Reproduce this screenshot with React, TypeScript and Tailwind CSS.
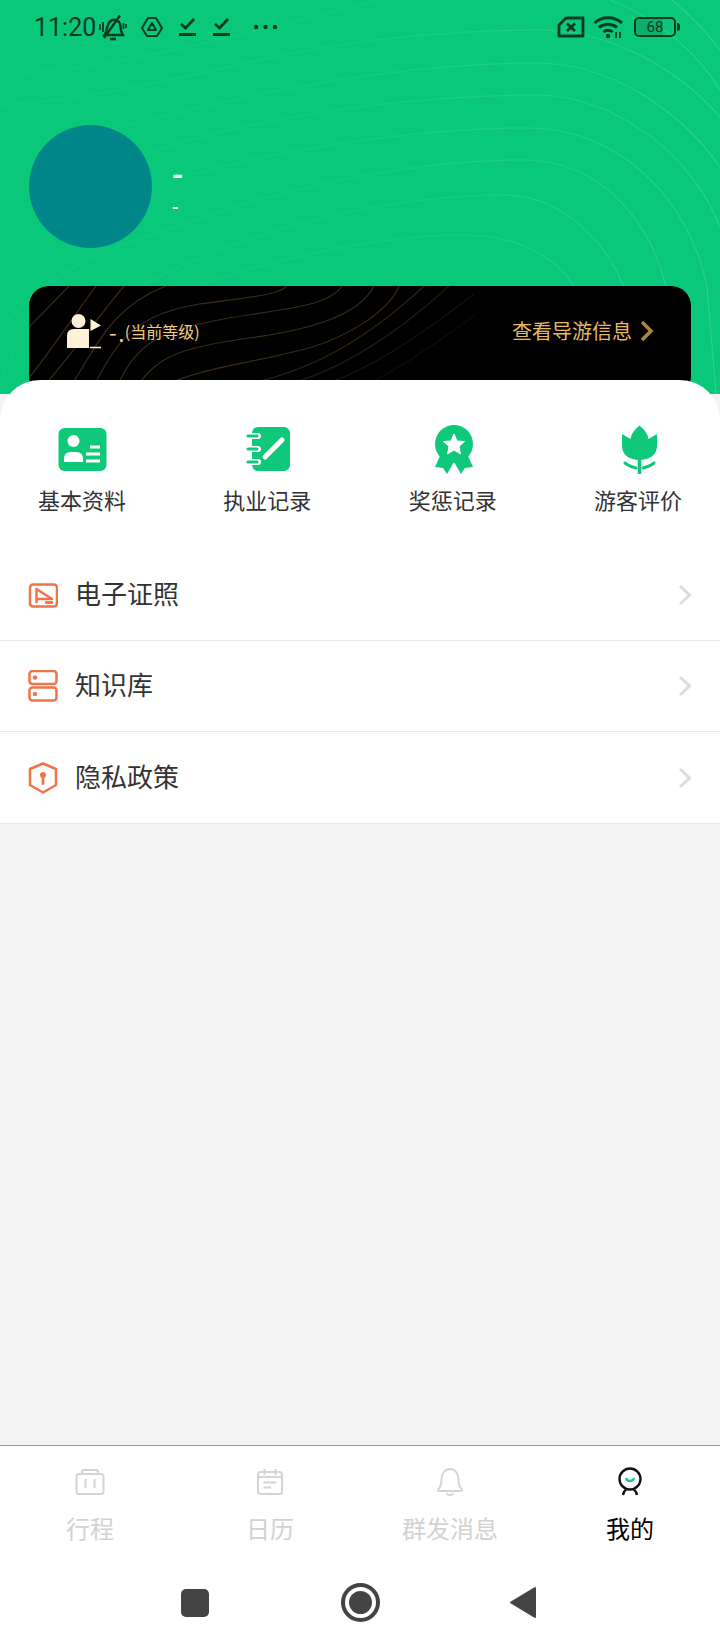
const FONT = "font-['Noto_Sans_CJK_SC','Noto_Sans',sans-serif]";

const GRID_ITEMS = [
  { label: "基本资料", icon: <CardIcon /> },
  { label: "执业记录", icon: <NoteIcon /> },
  { label: "奖惩记录", icon: <AwardIcon /> },
  { label: "游客评价", icon: <TulipIcon /> },
];

const ROWS = [
  { label: "电子证照", icon: <LicenseIcon />, height: "h-[91px]" },
  { label: "知识库", icon: <ServerIcon />, height: "h-[91px]" },
  { label: "隐私政策", icon: <ShieldIcon />, height: "h-[92px]" },
];

const TABS = [
  { label: "行程", icon: <BagIcon />, active: false },
  { label: "日历", icon: <CalendarIcon />, active: false },
  { label: "群发消息", icon: <BellIcon />, active: false },
  { label: "我的", icon: <MeIcon />, active: true },
];

function HeaderLines() {
  return (
    <svg className="absolute inset-0" width="720" height="394" fill="none" stroke="url(#contour)" strokeWidth="1.2">
      <defs>
        <linearGradient id="contour" gradientUnits="userSpaceOnUse" x1="0" y1="0" x2="720" y2="0">
          <stop offset="0" stopColor="#ffffff" stopOpacity="0.03" />
          <stop offset="0.5" stopColor="#ffffff" stopOpacity="0.05" />
          <stop offset="1" stopColor="#ffffff" stopOpacity="0.14" />
        </linearGradient>
      </defs>
      <path d="M0 430 C40 350 90 320 193 287 C300 250 400 235 460 235 C510 235 550 250 575 287" />
      <path d="M0 380 C30 310 70 290 140 287 C250 225 400 195 505 195 C560 195 605 240 624 287" />
      <path d="M0 330 C50 270 100 250 180 225 C290 185 420 160 523 160 C600 160 650 220 666 287 C672 320 676 350 680 394" />
      <path d="M0 270 C60 235 110 200 190 175 C300 145 430 128 528 128 C620 128 690 200 707 287 L716 394" />
      <path d="M0 215 C60 190 110 165 190 140 C300 110 430 95 537 95 C610 95 690 150 720 227" />
      <path d="M0 150 C70 140 130 125 210 105 C320 80 430 63 537 63 C610 63 680 110 720 167" />
      <path d="M0 105 C90 100 170 80 260 60 C340 42 440 30 540 30 C600 30 670 60 720 117" />
      <path d="M0 75 C100 70 200 45 300 20 L380 0" />
      <path d="M610 0 C660 20 695 50 720 90" />
      <path d="M672 0 C690 15 705 30 720 50" />
    </svg>
  );
}

function CardLines() {
  return (
    <svg className="absolute inset-0" width="662" height="110" fill="none" stroke="#3a2a16" strokeWidth="1.2">
      <path d="M0 41 L40 0" />
      <path d="M0 92 C25 60 45 30 67 0" />
      <path d="M15 100 C45 65 70 30 95 0" />
      <path d="M42 100 C70 55 85 20 137 0" />
      <path d="M65 100 C90 50 110 28 170 18 C210 12 250 10 258 0" />
      <path d="M88 100 C110 55 130 45 200 32 C260 22 300 20 313 0" />
      <path d="M108 100 C130 70 150 62 220 52 C280 44 330 30 345 0" />
      <path d="M135 100 C170 82 220 78 280 62 C320 50 360 25 370 0" />
      <path d="M210 100 C260 90 320 70 395 0" strokeOpacity="0.8" />
      <path d="M250 100 C300 90 360 55 420 0" strokeOpacity="0.6" />
      <path d="M290 100 C340 85 390 50 445 8" strokeOpacity="0.4" />
      <path d="M335 100 C375 80 410 55 445 30" strokeOpacity="0.25" />
    </svg>
  );
}

function StatusBar() {
  return (
    <div className="relative flex h-[54px] items-center text-[#0a3a26]">
      <span className="ml-[34px] font-['Roboto'] text-[25px] leading-none">11:20</span>
      <svg className="ml-[3px]" width="28" height="27" viewBox="0 0 28 27" fill="none" stroke="currentColor" strokeWidth="2.400">
        <path d="M5.500 21 C8 18 7.500 11 11 7.500 C15 4 21.500 6 21.500 13 C21.500 17 23 19 24 21 Z" />
        <path d="M11 25 H17" strokeWidth="2.600" />
        <path d="M21 1.500 L5 24" />
        <path d="M1 10 V16 M4 8 V18 M24.500 9 V15 M27 10 V14" strokeWidth="1.800" />
      </svg>
      <svg className="ml-[14px]" width="22" height="22" viewBox="0 0 22 22" fill="none" stroke="currentColor" strokeWidth="2" strokeLinejoin="round">
        <path d="M7 2 H15 L21 12 L16 20 H6 L1 12 Z" />
        <path d="M11 7 L15 14 H7 Z" />
      </svg>
      <svg className="ml-[16px]" width="18" height="20" viewBox="0 0 18 20" fill="none" stroke="currentColor" strokeWidth="2.800">
        <path d="M2 7 L6.500 11 L15 2" />
        <path d="M0 17.500 H17" strokeWidth="3" />
      </svg>
      <svg className="ml-[16px]" width="18" height="20" viewBox="0 0 18 20" fill="none" stroke="currentColor" strokeWidth="2.800">
        <path d="M2 7 L6.500 11 L15 2" />
        <path d="M0 17.500 H17" strokeWidth="3" />
      </svg>
      <svg className="ml-[22px]" width="25" height="6" viewBox="0 0 25 6" fill="currentColor">
        <circle cx="3" cy="3" r="2.200" />
        <circle cx="12.500" cy="3" r="2.200" />
        <circle cx="22" cy="3" r="2.200" />
      </svg>
      <svg className="ml-auto" width="28" height="22" viewBox="0 0 28 22" fill="none" stroke="currentColor" strokeWidth="2.800" strokeLinejoin="round">
        <path d="M9 2 H26 V20 H2 V9 Z" />
        <path d="M10 7.500 L18 15 M18 7.500 L10 15" strokeWidth="2.800" />
      </svg>
      <svg className="ml-[8px]" width="31" height="24" viewBox="0 0 31 24" fill="none" stroke="currentColor" strokeWidth="3">
        <path d="M1.500 8 C9 1 21 1 29 8" />
        <path d="M6 12.500 C11 8 19 8 24 12.500" />
        <path d="M10.500 17 C13 14.500 17 14.500 19.500 17" />
        <circle cx="15" cy="21" r="2.200" fill="currentColor" stroke="none" />
        <path d="M23 17 V23 M27 17 V23" strokeWidth="1.800" />
      </svg>
      <div className="ml-[10px] mr-[40px] flex items-center">
        <div className="flex h-[20px] w-[42px] items-center justify-center rounded-[5px] border-2 border-current bg-[linear-gradient(90deg,#0bb06c_70%,transparent_70%)]">
          <span className="font-['Roboto'] text-[15px] leading-none">68</span>
        </div>
        <div className="ml-[1px] h-[8px] w-[3px] rounded-r-sm bg-current" />
      </div>
    </div>
  );
}

function CardIcon() {
  return (
    <svg width="50" height="50" viewBox="0 0 50 50">
      <rect x="1.500" y="4" width="48" height="43" rx="6" fill="#0fc87a" />
      <circle cx="16.500" cy="17" r="6" fill="#fff" />
      <path d="M7 38 V35 Q7 28 14 28 H19 Q26 28 26 35 V38 Z" fill="#fff" />
      <path d="M33 23 H43 M29 30 H43 M29 37 H43" stroke="#fff" strokeWidth="3" />
    </svg>
  );
}

function NoteIcon() {
  return (
    <svg width="50" height="50" viewBox="0 0 50 50">
      <rect x="10" y="3" width="38" height="44" rx="6" fill="#0fc87a" />
      <path d="M10 12 H16 M10 25 H16 M10 38 H16" stroke="#fff" strokeWidth="6" strokeLinecap="round" />
      <path d="M6 12 H15 M6 25 H15 M6 38 H15" stroke="#0fc87a" strokeWidth="3" strokeLinecap="round" />
      <path d="M23 33 L40 16" stroke="#fff" strokeWidth="5" strokeLinecap="round" />
    </svg>
  );
}

function AwardIcon() {
  return (
    <svg width="50" height="50" viewBox="0 0 50 50">
      <path d="M12 32 L7 43 L15 44 L19 50 L26 38 L33 50 L37 44 L45 43 L40 32 Z" fill="#0fc87a" />
      <circle cx="26" cy="20" r="19" fill="#0fc87a" />
      <path d="M26 10 L29 17 L36.500 17.500 L31 22.500 L32.500 30 L26 26 L19.500 30 L21 22.500 L15.500 17.500 L23 17 Z" fill="#fff" stroke="#fff" strokeLinejoin="round" />
    </svg>
  );
}

function TulipIcon() {
  return (
    <svg width="50" height="50" viewBox="0 0 50 50">
      <path d="M26.500 1.500 C31 5 35 10 35.500 15 L44 10 V22 C44 31 36 36 26.500 36 C17 36 9 31 9 22 V10 L17.500 15 C18 10 22 5 26.500 1.500 Z" fill="#0fc87a" />
      <path d="M26.500 35 V49" stroke="#0fc87a" strokeWidth="3.500" strokeLinecap="round" />
      <path d="M12 39 C15 41.500 19 43 23 44 M30 44 C34 43 38 41.500 41 39" fill="none" stroke="#0fc87a" strokeWidth="3" strokeLinecap="round" />
    </svg>
  );
}

function LicenseIcon() {
  return (
    <svg width="30" height="32" viewBox="0 0 30 32" fill="none" stroke="#f0744a" strokeWidth="2.500">
      <rect x="2" y="5.500" width="27" height="22" rx="3" />
      <path d="M8.500 24 V10 L24 20 H9" strokeLinejoin="round" />
      <path d="M17 23.500 H25" strokeWidth="2.800" />
    </svg>
  );
}

function ServerIcon() {
  return (
    <svg width="30" height="32" viewBox="0 0 30 32" fill="none" stroke="#f0744a" strokeWidth="2.500">
      <rect x="1.500" y="1" width="27" height="13" rx="3" />
      <rect x="1.500" y="17.500" width="27" height="13" rx="3" />
      <circle cx="7" cy="7.500" r="2.200" fill="#f0744a" stroke="none" />
      <circle cx="7" cy="24" r="2.200" fill="#f0744a" stroke="none" />
    </svg>
  );
}

function ShieldIcon() {
  return (
    <svg width="30" height="32" viewBox="0 0 30 32" fill="none" stroke="#f0744a" strokeWidth="2.500" strokeLinejoin="round">
      <path d="M15 1.500 L28 7 V23 L15 30.500 L2 23 V7 Z" />
      <circle cx="15" cy="13" r="3" fill="#f0744a" stroke="none" />
      <path d="M15 14 V21.500" strokeWidth="2.800" strokeLinecap="round" />
    </svg>
  );
}

function BagIcon() {
  return (
    <svg width="30" height="30" viewBox="0 0 30 30" fill="none" stroke="#d4d4d4" strokeWidth="2">
      <rect x="1.500" y="7" width="27" height="20" rx="2.500" />
      <path d="M7 7 V5 Q7 3 9 3 H21 Q23 3 23 5 V7" />
      <path d="M10.500 12 V21 M19.500 12 V21" />
    </svg>
  );
}

function CalendarIcon() {
  return (
    <svg width="30" height="30" viewBox="0 0 30 30" fill="none" stroke="#d4d4d4" strokeWidth="2">
      <rect x="3" y="5" width="24" height="22" rx="2.500" />
      <path d="M9.500 2 V8 M20.500 2 V8 M3 10 H27" />
      <path d="M8.500 15.500 H21.500 M8.500 20.500 H16" />
    </svg>
  );
}

function BellIcon() {
  return (
    <svg width="30" height="30" viewBox="0 0 30 30" fill="none" stroke="#d4d4d4" strokeWidth="2" strokeLinejoin="round">
      <path d="M3 22.500 C6 20 6.500 17 6.500 12.500 C6.500 6.500 10 2 15 2 C20 2 23.500 6.500 23.500 12.500 C23.500 17 24 20 27 22.500 C27 23.500 26.500 24 25.500 24 H4.500 C3.500 24 3 23.500 3 22.500 Z" />
      <path d="M11.500 26.500 C13 28.500 17 28.500 18.500 26.500" />
    </svg>
  );
}

function MeIcon() {
  return (
    <svg width="30" height="30" viewBox="0 0 30 30" fill="none" stroke="#111" strokeWidth="2.400">
      <circle cx="15" cy="12" r="10.500" />
      <path d="M8 28 C8.500 25 10 23 12 22 M22 28 C21.500 25 20 23 18 22" />
      <path d="M11 11 C12 15 18 15 19 11" stroke="#19cf86" strokeWidth="2.400" />
    </svg>
  );
}

export default function App() {
  return (
    <div className={`flex h-[1650px] w-[720px] flex-col overflow-hidden bg-[#f3f3f3] ${FONT}`}>
      <header className="relative h-[394px] shrink-0 overflow-hidden bg-[#0ac87a]">
        <HeaderLines />
        <StatusBar />
        <div className="relative mt-[71px] flex items-center px-[29px]">
          <div className="h-[123px] w-[123px] rounded-full bg-[#008689]" />
          <div className="ml-[20px] flex flex-col text-white">
            <span className="text-[30px] font-bold leading-[36px]">-</span>
            <span className="mt-[1px] text-[18px] font-bold leading-[28px]">-</span>
          </div>
        </div>
        <div className="relative mx-[29px] mt-[38px] h-[110px] overflow-hidden rounded-[20px] bg-black">
          <CardLines />
          <div className="relative flex h-[90px] items-center pl-[37px] pr-[37px]">
            <svg width="36" height="36" viewBox="0 0 36 36" fill="#fff0d8">
              <circle cx="12.500" cy="8" r="7" />
              <path d="M1 35 V23 Q1 16 8 16 H23 V35 Z" />
              <path d="M24.500 6 L35 12.500 L24.500 18 Z" />
              <path d="M24 34.500 H35" stroke="#fff0d8" strokeWidth="1.400" />
            </svg>
            <span className="ml-[7px] text-[22px] leading-none text-[#f5d28f]">-</span>
            <span className="ml-[2px] mt-[8px] text-[16px] font-bold leading-none text-[#f5d28f]">.</span>
            <span className="ml-[1px] text-[16px] leading-none text-[#f0cb84]">(当前等级)</span>
            <span className="ml-auto text-[20px] leading-none text-[#e6b965]">查看导游信息</span>
            <svg className="ml-[7px]" width="15" height="22" viewBox="0 0 15 22" fill="none" stroke="#a98546" strokeWidth="3.500">
              <path d="M3 2 L12 11 L3 20" />
            </svg>
          </div>
        </div>
      </header>

      <main className="relative -mt-[14px] flex flex-col rounded-t-[40px] bg-white">
        <div className="flex justify-between px-[38px] pt-[44px]">
          {GRID_ITEMS.map((item) => (
            <div key={item.label} className="flex flex-col items-center">
              {item.icon}
              <span className="mt-[10px] text-[22px] leading-[30px] text-[#333333]">{item.label}</span>
            </div>
          ))}
        </div>
        <div className="mt-[36px] flex flex-col">
          {ROWS.map((row) => (
            <div key={row.label} className={`flex items-center border-b border-[#e9e9e9] pl-[28px] pr-[28px] ${row.height}`}>
              {row.icon}
              <span className="mb-[4px] ml-[17px] text-[26px] leading-none text-[#333333]">{row.label}</span>
              <svg className="ml-auto" width="14" height="22" viewBox="0 0 14 22" fill="none" stroke="#dcdcdc" strokeWidth="3">
                <path d="M2 2 L11.500 11 L2 20" />
              </svg>
            </div>
          ))}
        </div>
      </main>

      <div className="flex-1" />

      <footer className="h-[205px] shrink-0 border-t border-[#999999] bg-white">
        <div className="grid grid-cols-4 pt-[21px]">
          {TABS.map((tab) => (
            <div key={tab.label} className="flex flex-col items-center">
              {tab.icon}
              <span className={`mt-[14px] text-[24px] leading-[34px] ${tab.active ? "text-black" : "text-[#d2d2d2]"}`}>{tab.label}</span>
            </div>
          ))}
        </div>
        <div className="mt-[38px] flex items-center pl-[181px]">
          <div className="h-[28px] w-[28px] rounded-[5px] bg-[#444444]" />
          <div className="ml-[132px] flex h-[39px] w-[39px] items-center justify-center rounded-full border-[4px] border-[#444444]">
            <div className="h-[23px] w-[23px] rounded-full bg-[#444444]" />
          </div>
          <svg className="ml-[129px]" width="28" height="33" viewBox="0 0 28 33" fill="#444444" stroke="#444444" strokeWidth="2" strokeLinejoin="round">
            <path d="M2 16.500 L26 2 V31 Z" />
          </svg>
        </div>
      </footer>
    </div>
  );
}
